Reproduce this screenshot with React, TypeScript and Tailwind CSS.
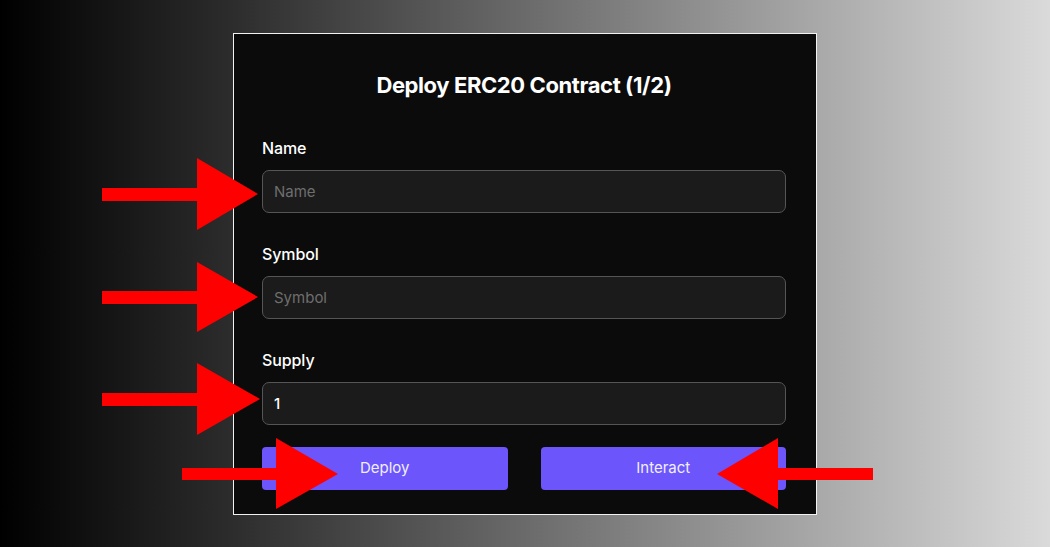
import React from "react";

function Field({ label, placeholder, value }: { label: string; placeholder: string; value?: string }) {
  return (
    <div className="flex flex-col">
      <label className="text-[16px] leading-[24px] font-medium text-white mb-[10px] tracking-[-0.1px]">{label}</label>
      <input
        readOnly
        defaultValue={value}
        placeholder={placeholder}
        className="h-[43px] w-full rounded-[7px] border border-[#555555] bg-[#1b1b1b] px-[11px] text-[15px] font-medium text-white placeholder:text-[#6e6e6e] placeholder:font-normal outline-none"
      />
    </div>
  );
}

export default function App() {
  return (
    <div
      className="relative w-[1050px] h-[547px] overflow-hidden bg-[linear-gradient(to_right,#000000_0%,#2a2a2a_21%,#ababab_79%,#dadada_100%)]"
      style={{ fontFamily: "Inter, 'Noto Sans', sans-serif" }}
    >
      <div className="pt-[33px] pl-[233px]">
        <div className="w-[584px] h-[482px] border border-[#f2f2f2] bg-[#0b0b0b] pl-[28px] pr-[30px] pt-[37px]">
          <h1 className="text-center text-[22px] leading-[28px] font-bold text-white tracking-[-0.4px]">
            Deploy ERC20 Contract (1/2)
          </h1>
          <div className="mt-[37px] flex flex-col gap-[29px]">
            <Field label="Name" placeholder="Name" />
            <Field label="Symbol" placeholder="Symbol" />
            <Field label="Supply" placeholder="Supply" value="1" />
          </div>
          <div className="mt-[22px] grid grid-cols-2 gap-[33px]">
            <button className="h-[43px] rounded-[4px] bg-[#6c55fa] text-[15px] font-normal text-[#f0efff]">Deploy</button>
            <button className="h-[43px] rounded-[4px] bg-[#6c55fa] text-[15px] font-normal text-[#f0efff]">Interact</button>
          </div>
        </div>
      </div>
      <svg className="absolute inset-0 pointer-events-none" width="1050" height="547" viewBox="0 0 1050 547">
        <g fill="#ff0000">
          <rect x="102" y="188" width="96" height="13" />
          <polygon points="197,158 258,194 197,230" />
          <rect x="102" y="291" width="96" height="13" />
          <polygon points="197,262 258,297 197,332" />
          <rect x="102" y="393" width="96" height="13" />
          <polygon points="197,363 260,399 197,435" />
          <rect x="182" y="468" width="95" height="12" />
          <polygon points="276,438 338,474 276,509" />
          <rect x="777" y="468" width="96" height="12" />
          <polygon points="778,438 717,474 778,509" />
        </g>
      </svg>
    </div>
  );
}
